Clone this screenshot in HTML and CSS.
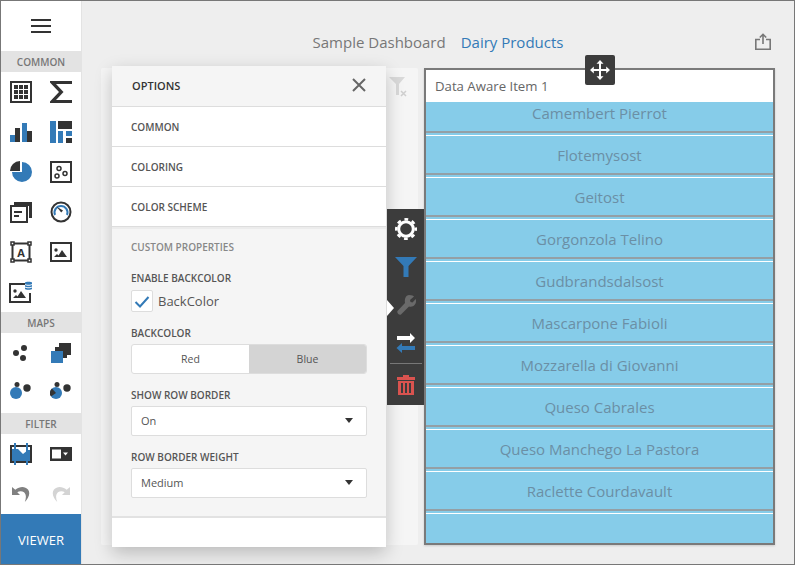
FILE: index.html
```html
<!DOCTYPE html>
<html lang="en">
<head>
<meta charset="utf-8">
<title>Dashboard Designer</title>
<link rel="stylesheet" href="styles.css">
</head>
<body>
<div class="app">
  <aside class="side">
    <div class="burger"><span></span><span></span><span></span></div>
    <div class="band">COMMON</div>
    <div class="tools">
      <div class="tool"><svg width="22" height="22" viewBox="0 0 22 22"><path class="d" fill-rule="evenodd" d="M0 0h22v22H0zM2 2v18h18V2z"/><path class="d" d="M4 4h4v4H4zM9 4h4v4H9zM14 4h4v4h-4zM4 9h4v4H4zM9 9h4v4H9zM14 9h4v4h-4zM4 14h4v4H4zM9 14h4v4H9zM14 14h4v4h-4z"/></svg></div>
      <div class="tool"><svg width="22" height="22" viewBox="0 0 22 22"><path class="d" d="M0 0h22v3H6l7.500 8L6 19h16v3H0v-1.500L9 11 0 1.500z"/></svg></div>
      <div class="tool"><svg width="22" height="20" viewBox="0 0 22 20"><path class="b" d="M0 13h5v7H0zM12 1h5v19h-5z"/><path class="d" d="M5 6h5v14H5zM17 9h5v11h-5z"/></svg></div>
      <div class="tool"><svg width="22" height="22" viewBox="0 0 22 22"><path class="b" d="M0 0h6v22H0zM8 10h5v12H8zM16 10h6v5h-6z"/><path class="d" d="M8 0h14v8H8zM16 17h6v5h-6z"/></svg></div>
      <div class="tool"><svg width="22" height="22" viewBox="0 0 22 22"><path class="b" d="M12 1a10 10 0 1 1-10 10h10z"/><path class="d" d="M10 0v10H0A10 10 0 0 1 10 0z"/></svg></div>
      <div class="tool"><svg width="22" height="22" viewBox="0 0 22 22"><path class="d" fill-rule="evenodd" d="M0 0h22v22H0zM2 2v18h18V2z"/><g class="ring"><circle cx="7" cy="15" r="2"/><circle cx="15" cy="12.500" r="2"/><circle cx="9" cy="7.500" r="2"/></g></svg></div>
      <div class="tool"><svg width="22" height="22" viewBox="0 0 22 22"><path class="d" d="M4 1h18v16h-3V5H4z"/><path class="d" fill-rule="evenodd" d="M0 4h18v18H0zM2 6v14h14V6z"/><path class="d" d="M4 10h8v2H4zM4 14h5v2H4z"/></svg></div>
      <div class="tool"><svg width="22" height="22" viewBox="0 0 22 22"><circle cx="11" cy="11" r="9.500" fill="none" stroke="#333" stroke-width="2"/><path d="M5 14A6.500 6.500 0 1 1 17 14" fill="none" stroke="#337ab7" stroke-width="2"/><path class="d" d="M6.500 5.500l6.500 4-1.800 2z"/></svg></div>
      <div class="tool"><svg width="22" height="22" viewBox="0 0 22 22"><rect x="2.500" y="2.500" width="17" height="17" fill="none" stroke="#333" stroke-width="2"/><g class="handle"><rect x="1" y="1" width="3" height="3"/><rect x="18" y="1" width="3" height="3"/><rect x="1" y="18" width="3" height="3"/><rect x="18" y="18" width="3" height="3"/></g><text class="glyph" x="11" y="15.500">A</text></svg></div>
      <div class="tool"><svg width="22" height="20" viewBox="0 0 22 20"><path class="d" fill-rule="evenodd" d="M0 0h22v20H0zM2 2v16h18V2z"/><circle class="d" cx="6" cy="8" r="1.700"/><path class="d" d="M4 15l3-3 1.500 1.500L12 8l5 7z"/></svg></div>
      <div class="tool"><svg width="24" height="22" viewBox="0 0 24 22"><path class="d" fill-rule="evenodd" d="M0 2h16v2H2v16h18v-8h2v10H0z"/><circle class="d" cx="6" cy="10" r="1.700"/><path class="d" d="M4 17l3-3 1.500 1.500L12 10l5 7z"/><path class="b" d="M16 1.500C16 .5 23 .5 23 1.500v1.500C23 4 16 4 16 3zM16 4c1.500 1 5.500 1 7 0v1.500C23 6.500 16 6.500 16 5.500zM16 6.500c1.500 1 5.500 1 7 0V8C23 9 16 9 16 8z"/></svg></div>
    </div>
    <div class="band">MAPS</div>
    <div class="tools">
      <div class="tool"><svg width="22" height="22" viewBox="0 0 22 22"><g class="d"><circle cx="6" cy="11" r="3"/><circle cx="14" cy="6" r="3"/><circle cx="13" cy="16" r="3"/></g></svg></div>
      <div class="tool"><svg width="22" height="22" viewBox="0 0 22 22"><path class="d" d="M9 1h12v12H9z"/><path class="d" d="M5 5h12v11H5z"/><path class="b" d="M1 9h12v12H1z"/></svg></div>
      <div class="tool"><svg width="22" height="22" viewBox="0 0 22 22"><g class="d"><circle cx="7" cy="2.500" r="2.500"/><circle cx="17" cy="6" r="3.700"/></g><circle class="b" cx="6" cy="11" r="6"/></svg></div>
      <div class="tool"><svg width="22" height="22" viewBox="0 0 22 22"><g class="d"><circle cx="7" cy="2.500" r="2.500"/><circle cx="17" cy="6" r="3.700"/></g><circle class="b" cx="6" cy="11" r="6"/><path class="d" d="M6 11L1 14.500A6 6 0 0 1 2 6.500z"/></svg></div>
    </div>
    <div class="band">FILTER</div>
    <div class="tools">
      <div class="tool"><svg width="22" height="22" viewBox="0 0 22 22"><path class="d" d="M0 2h22v18H0z"/><path d="M2 4h18v14H2z" fill="#fff"/><path class="b" d="M2 6l6 0 5 5 5-4 2 0v11H2z"/><path class="b" d="M4 0h2v22H4zM16 0h2v22h-2z"/></svg></div>
      <div class="tool"><svg width="22" height="14" viewBox="0 0 22 14"><path class="d" fill-rule="evenodd" d="M0 0h22v14H0zM2 2.500v9h18v-9z"/><path class="d" d="M11 2h9v10h-9z"/><path d="M13 5.500h5l-2.500 3z" fill="#fff"/></svg></div>
      <div class="tool"><svg width="18" height="16" viewBox="0 0 18 16"><path class="u" d="M0 1v8h8L5.300 6.300C7 5 10 4.800 12 6.300c2.200 1.900 2.500 5 .8 9.700 3.700-3.500 6-8.700 3.200-12.500C13 0 7.800 0 3.300 3.800z"/></svg></div>
      <div class="tool"><svg width="18" height="16" viewBox="0 0 18 16"><path class="r" d="M18 1v8h-8l2.700-2.700C11 5 8 4.800 6 6.300c-2.200 1.900-2.500 5-.8 9.700C1.500 12.500-.8 7.300 2 3.500 5 0 10.200 0 14.700 3.800z"/></svg></div>
    </div>
    <div class="viewer">VIEWER</div>
  </aside>

  <main class="main">
    <header class="title">
      <span class="title-name">Sample Dashboard</span>
      <span class="title-sub">Dairy Products</span>
      <svg class="share" width="16" height="17" viewBox="0 0 16 17"><path d="M5 6.500H.8v9.700h14.400V6.500H11" fill="none" stroke="#777" stroke-width="1.600"/><path d="M8 11V1.500M4.800 4.500L8 1.300l3.200 3.200" fill="none" stroke="#777" stroke-width="1.600"/></svg>
    </header>
    <div class="board">
      <section class="card-left">
        <svg width="19" height="20" viewBox="0 0 19 20"><path d="M0 0h16L10 7v11H7V7z" fill="#d9d9d9"/><path d="M12 14l5 5M17 14l-5 5" stroke="#cfcfcf" stroke-width="1.500"/></svg>
      </section>
      <section class="card-right">
        <div class="caption">Data Aware Item 1</div>
        <div class="list">
          <div class="row">Camembert Pierrot</div>
          <div class="row">Flotemysost</div>
          <div class="row">Geitost</div>
          <div class="row">Gorgonzola Telino</div>
          <div class="row">Gudbrandsdalsost</div>
          <div class="row">Mascarpone Fabioli</div>
          <div class="row">Mozzarella di Giovanni</div>
          <div class="row">Queso Cabrales</div>
          <div class="row">Queso Manchego La Pastora</div>
          <div class="row">Raclette Courdavault</div>
          <div class="row"></div>
        </div>
      </section>
    </div>
  </main>

  <div class="mover"><svg width="20" height="20" viewBox="0 0 20 20"><path fill="#fff" d="M10 0l3.500 3.800h-2.500V9h5.200V6.500L20 10l-3.800 3.500V11H11v5.200h2.500L10 20l-3.500-3.800H9V11H3.800v2.500L0 10l3.800-3.500V9H9V3.800H6.500z"/></svg></div>

  <aside class="options">
    <div class="opt-head"><span>OPTIONS</span><svg width="14" height="14" viewBox="0 0 14 14"><path d="M1 1l12 12M13 1L1 13" stroke="#666" stroke-width="2"/></svg></div>
    <div class="opt-row">COMMON</div>
    <div class="opt-row">COLORING</div>
    <div class="opt-row">COLOR SCHEME</div>
    <div class="opt-body">
      <div class="opt-section">CUSTOM PROPERTIES</div>
      <div class="field-label">ENABLE BACKCOLOR</div>
      <div class="check"><span class="box"><svg width="16" height="13" viewBox="0 0 16 13"><path d="M1.500 7l4.500 4.500 8.500-9.500" fill="none" stroke="#337ab7" stroke-width="2"/></svg></span><span class="check-text">BackColor</span></div>
      <div class="field-label">BACKCOLOR</div>
      <div class="seg"><span class="seg-item">Red</span><span class="seg-item seg-on">Blue</span></div>
      <div class="field-label">SHOW ROW BORDER</div>
      <div class="select"><span>On</span><i class="caret"></i></div>
      <div class="field-label">ROW BORDER WEIGHT</div>
      <div class="select"><span>Medium</span><i class="caret"></i></div>
    </div>
    <div class="opt-foot"></div>
  </aside>

  <aside class="bar">
    <i class="bar-arrow"></i>
    <svg class="bar-icon bar-gear" width="22" height="22" viewBox="0 0 22 22"><circle cx="11" cy="11" r="7.300" fill="none" stroke="#fff" stroke-width="3"/><circle cx="11" cy="11" r="9.700" fill="none" stroke="#fff" stroke-width="2.600" stroke-dasharray="3.800 3.820" stroke-dashoffset="1.900"/></svg>
    <svg class="bar-icon" width="22" height="20" viewBox="0 0 22 20"><path fill="#337ab7" d="M0 0h22l-8.500 9v11h-5V9z"/></svg>
    <svg class="bar-icon" width="20" height="20" viewBox="0 0 20 20"><path fill="#6a6a6a" d="M13 0c3 0 4.500 1 5 1.500L14 5l.5 2 2 .5 3.200-3.500C20.500 6 20 9.500 17.500 11c-2 1-3.500 .7-4.500 .5L5 19.500c-1.500 1-4.500-1-3.500-3.500L9 8C8.200 4 10 0 13 0z"/></svg>
    <svg class="bar-icon bar-arrows" width="20" height="20" viewBox="0 0 20 20"><path fill="#fff" d="M1 3h13V0l5 5-5 5V7H1z"/><path fill="#337ab7" d="M19 13H6v-3l-5.500 5L6 20v-3h13z"/></svg>
    <div class="bar-sep"></div>
    <svg class="bar-icon" width="18" height="20" viewBox="0 0 18 20"><path fill="#d9534f" fill-rule="evenodd" d="M6 0h6v2h6v3H0V2h6zM1 6h16v14H1zM4 8v10h2V8zM8 8v10h2V8zM12 8v10h2V8z"/></svg>
  </aside>
</div>
</body>
</html>
```
FILE: styles.css
```css
* { box-sizing: border-box; }
html, body { margin: 0; padding: 0; height: 100%; }
body { font-family: "Open Sans", "Noto Sans", sans-serif; overflow: hidden; }
.app {
  position: relative;
  width: 795px;
  height: 565px;
  display: flex;
  background: #eee;
  border: 1px solid #777;
  overflow: hidden;
}
.side {
  width: 81px;
  flex: none;
  background: #fff;
  border-right: 1px solid #e3e3e3;
  display: flex;
  flex-direction: column;
}
.burger {
  height: 50px;
  flex: none;
  display: flex;
  flex-direction: column;
  align-items: center;
  gap: 4px;
  padding-top: 18px;
}
.burger span { display: block; width: 20px; height: 2px; background: #333; }
.band {
  height: 21px;
  flex: none;
  background: #e3e3e3;
  color: #777;
  font-size: 10px;
  font-weight: 600;
  text-align: center;
  line-height: 23px;
}
.tools { display: grid; grid-template-columns: 40px 40px; grid-auto-rows: 40px; }
.tool { display: flex; align-items: center; justify-content: center; }
.tool svg { display: block; }
.d, g.d { fill: #333; }
.b { fill: #337ab7; }
.u { fill: #808080; }
.r { fill: #d4d4d4; }
.ring circle { fill: none; stroke: #333; stroke-width: 1.500; }
.handle rect { fill: #fff; stroke: #333; stroke-width: 1.500; }
.glyph { font-family: "Open Sans", sans-serif; font-size: 11px; font-weight: 700; fill: #333; text-anchor: middle; }
.viewer {
  margin-top: auto;
  height: 50px;
  flex: none;
  background: #337ab7;
  color: #fff;
  font-size: 13px;
  text-align: center;
  line-height: 53px;
}
.main { flex: 1; min-width: 0; display: flex; flex-direction: column; }
.title {
  position: relative;
  height: 67px;
  flex: none;
  display: flex;
  justify-content: center;
  gap: 15px;
  padding-top: 30px;
  font-size: 15px;
  line-height: 22px;
}
.title-name { color: #777; }
.title-sub { color: #337ab7; }
.share { position: absolute; right: 23px; top: 32px; }
.board { flex: 1; min-height: 0; display: flex; gap: 6px; padding: 0 19px 19px 19px; }
.card-left {
  width: 317px;
  flex: none;
  background: #f5f5f5;
  border-radius: 2px;
  display: flex;
  justify-content: flex-end;
  align-items: flex-start;
  padding: 9px 10px 0 0;
}
.card-right {
  flex: 1;
  min-width: 0;
  border: 2px solid #7a7a7a;
  background: #86cce9;
  display: flex;
  flex-direction: column;
  overflow: hidden;
  box-shadow: 0 1px 2px rgba(0,0,0,.15);
}
.caption {
  height: 32px;
  flex: none;
  background: #fff;
  color: #666;
  font-size: 13.200px;
  line-height: 32px;
  padding-left: 9px;
}
.list { flex: 1; min-height: 0; overflow: hidden; }
.row {
  height: 42px;
  color: #6b8fa5;
  font-size: 15px;
  line-height: 44px;
  text-align: center;
  border-bottom: 2px solid #949fa5;
  box-shadow: inset 0 2px 0 #86cce9, inset 0 3px 0 #fff;
}
.row:first-child { height: 31px; line-height: 22px; box-shadow: none; }
.mover {
  position: absolute;
  left: 584px;
  top: 54px;
  width: 30px;
  height: 30px;
  background: #3c3c3c;
  border-radius: 2px;
  display: flex;
  align-items: center;
  justify-content: center;
}
.options {
  position: absolute;
  left: 111px;
  top: 65px;
  width: 274px;
  height: 481px;
  background: #fff;
  display: flex;
  flex-direction: column;
  border-radius: 2px;
  box-shadow: 0 6px 18px rgba(0,0,0,.22);
}
.opt-head {
  height: 41px;
  flex: none;
  background: #f5f5f5;
  border-bottom: 1px solid #ddd;
  display: flex;
  align-items: center;
  justify-content: space-between;
  padding: 0 20px 2px 20px;
  font-size: 11px;
  font-weight: 600;
  color: #333;
}
.opt-row {
  height: 40px;
  flex: none;
  border-bottom: 1px solid #ddd;
  padding-left: 19px;
  font-size: 10px;
  font-weight: 600;
  color: #555;
  line-height: 40px;
}
.opt-body {
  flex: 1;
  min-height: 0;
  background: #f5f5f5;
  border-top: 2px solid #ececec;
  border-bottom: 2px solid #e2e2e2;
  padding: 10px 19px 0;
}
.opt-section { font-size: 10px; font-weight: 600; color: #888; line-height: 16px; margin-bottom: 15px; }
.field-label { font-size: 10px; font-weight: 600; color: #555; line-height: 16px; margin-bottom: 3px; }
.check { display: flex; align-items: center; gap: 5px; height: 22px; margin: 4px 0 13px; }
.box {
  width: 22px;
  height: 22px;
  background: #fff;
  border: 1px solid #ddd;
  border-radius: 2px;
  display: flex;
  align-items: center;
  justify-content: center;
}
.check-text { font-size: 13px; color: #555; }
.seg {
  display: flex;
  height: 30px;
  border: 1px solid #ddd;
  border-radius: 3px;
  margin-bottom: 13px;
  overflow: hidden;
  background: #fff;
}
.seg-item { flex: 1; text-align: center; font-size: 10.500px; color: #555; line-height: 28px; }
.seg-on { background: #d4d4d4; }
.select {
  height: 30px;
  background: #fff;
  border: 1px solid #ddd;
  border-radius: 2px;
  display: flex;
  align-items: center;
  justify-content: space-between;
  padding: 0 13px 2px 9px;
  font-size: 11px;
  color: #555;
  margin-bottom: 13px;
}
.caret { width: 0; height: 0; border: 4px solid transparent; border-top: 5px solid #333; border-bottom: 0; }
.opt-foot { height: 29px; flex: none; background: #fff; }
.bar {
  position: absolute;
  left: 386px;
  top: 208px;
  width: 37px;
  height: 196px;
  background: #3c3c3c;
  display: flex;
  flex-direction: column;
  align-items: center;
  padding-top: 9px;
}
.bar-icon { flex: none; display: block; margin-bottom: 18px; }
.bar-gear { margin-bottom: 17px; }
.bar-arrows { margin-bottom: 10px; }
.bar-arrow {
  position: absolute;
  left: 0;
  top: 91px;
  width: 0;
  height: 0;
  border: 8px solid transparent;
  border-left: 7px solid #fff;
  border-right: 0;
}
.bar-sep { width: 32px; height: 1px; background: #777; flex: none; margin-bottom: 11px; }
```
